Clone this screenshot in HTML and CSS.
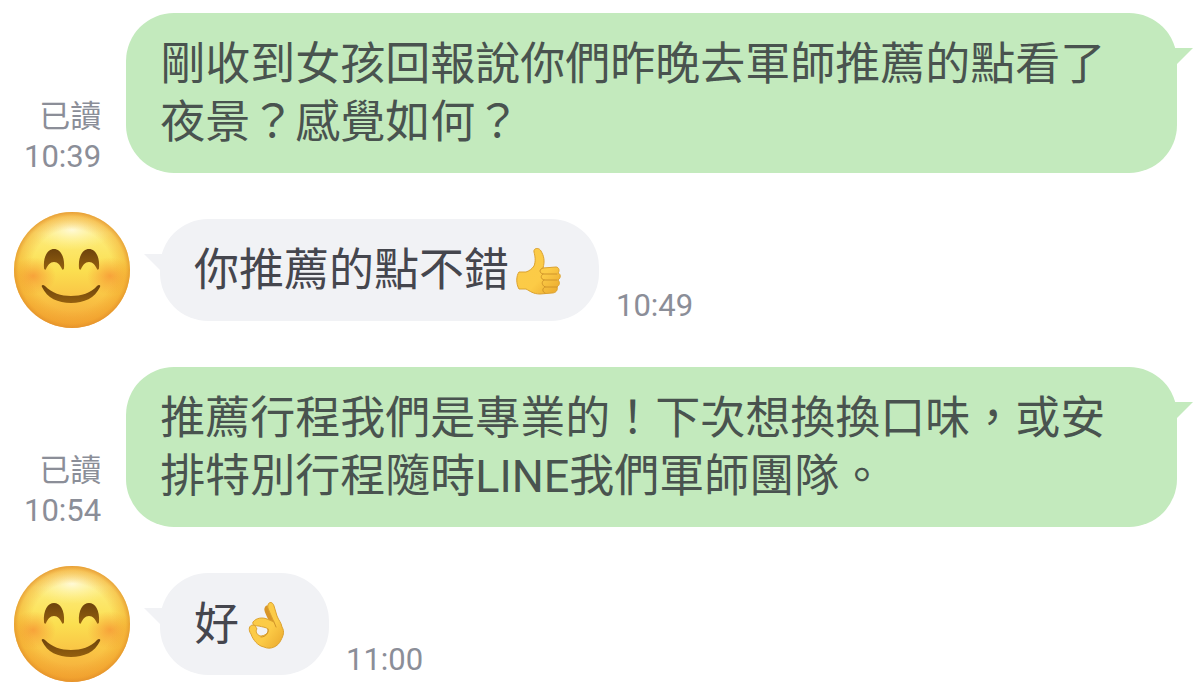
FILE: index.html
```html
<!DOCTYPE html>
<html lang="zh-Hant">
<head>
  <meta charset="UTF-8">
  <meta name="viewport" content="width=device-width, initial-scale=1.0">
  <title>LINE 對話</title>
  <link rel="stylesheet" href="styles.css">
</head>
<body>

  <!-- shared avatar drawing -->
  <svg class="defs" width="0" height="0" aria-hidden="true">
    <defs>
      <linearGradient id="face" x1="0" y1="0" x2="0" y2="1">
        <stop offset="0" stop-color="#fbd060"/>
        <stop offset="0.18" stop-color="#fdec7c"/>
        <stop offset="0.5" stop-color="#fbdf50"/>
        <stop offset="0.75" stop-color="#f9c244"/>
        <stop offset="1" stop-color="#f3a537"/>
      </linearGradient>
      <radialGradient id="rim">
        <stop offset="0.7" stop-color="#ee9420" stop-opacity="0"/>
        <stop offset="0.92" stop-color="#ee9822" stop-opacity="0.4"/>
        <stop offset="1" stop-color="#e08c28" stop-opacity="0.75"/>
      </radialGradient>
      <radialGradient id="blush">
        <stop offset="0" stop-color="#f5852f" stop-opacity="0.65"/>
        <stop offset="1" stop-color="#f58a2f" stop-opacity="0"/>
      </radialGradient>
      <radialGradient id="shine">
        <stop offset="0" stop-color="#fffbe0" stop-opacity="0.9"/>
        <stop offset="1" stop-color="#fff7a0" stop-opacity="0"/>
      </radialGradient>
      <linearGradient id="brown" x1="0" y1="0" x2="0" y2="1">
        <stop offset="0" stop-color="#6d430c"/>
        <stop offset="1" stop-color="#94600f"/>
      </linearGradient>
      <linearGradient id="skin" x1="0" y1="0" x2="1" y2="1">
        <stop offset="0" stop-color="#fbcb4a"/>
        <stop offset="0.6" stop-color="#fccb46"/>
        <stop offset="1" stop-color="#e9a62c"/>
      </linearGradient>
      <clipPath id="disc"><circle cx="59" cy="59" r="58"/></clipPath>
    </defs>
    <symbol id="smile" viewBox="0 0 118 118">
      <circle cx="59" cy="59" r="58" fill="url(#face)"/>
      <g clip-path="url(#disc)">
        <ellipse cx="59" cy="19" rx="42" ry="20" fill="url(#shine)"/>
        <ellipse cx="20" cy="65" rx="23" ry="19" fill="url(#blush)"/>
        <ellipse cx="97" cy="65" rx="23" ry="19" fill="url(#blush)"/>
      </g>
      <circle cx="59" cy="59" r="58" fill="url(#rim)"/>
      <path d="M31 57c-1-12 4-19 10-19s11 7 10 19c0 2-2 2-2 1-2-4-4-7-8-7s-6 3-8 7c0 1-2 1-2-1z" fill="url(#brown)"/>
      <path d="M66 57c-1-12 4-19 10-19s11 7 10 19c0 2-2 2-2 1-2-4-4-7-8-7s-6 3-8 7c0 1-2 1-2-1z" fill="url(#brown)"/>
      <path d="M29 76c-1-2 1-3 3-1 7 7 16 10 26 10s20-3 26-10c2-2 4-1 3 1-5 11-16 16-29 16s-24-5-29-16z" fill="url(#brown)"/>
    </symbol>
  </svg>

  <main class="chat">

    <div class="message sent">
      <div class="meta">
        <span>已讀</span>
        <time>10:39</time>
      </div>
      <p class="bubble">剛收到女孩回報說你們昨晚去軍師推薦的點看了夜景？感覺如何？</p>
    </div>

    <div class="message received">
      <svg class="avatar" role="img" aria-label="avatar"><use href="#smile"/></svg>
      <p class="bubble">你推薦的點不錯<svg class="emoji" viewBox="0 0 56 50" role="img" aria-label="thumbs up">
        <path d="M25 19C27 14 26 9 25 5C24 1 30 0 32 4C35 9 36 14 34 21L47 20C50 20 51 24 49 26C52 27 52 31 49 33C51 35 51 38 48 40C49 43 47 46 43 46L31 47C24 47 21 44 17 42L10 42C7 37 7 29 10 25L17 25C20 24 23 22 25 19Z" fill="url(#skin)" stroke="#dca22f"/>
        <path d="M34 21c-4 1-4 5 0 6h14M34 27c-3 2-2 5 1 6h13M35 33c-3 2-2 5 1 7h12M36 40c-3 1-3 5 0 6" fill="none" stroke="#d0942a" stroke-linecap="round"/>
      </svg></p>
      <div class="meta"><time>10:49</time></div>
    </div>

    <div class="message sent">
      <div class="meta">
        <span>已讀</span>
        <time>10:54</time>
      </div>
      <p class="bubble">推薦行程我們是專業的！下次想換換口味，或安排特別行程隨時LINE我們軍師團隊。</p>
    </div>

    <div class="message received">
      <svg class="avatar" role="img" aria-label="avatar"><use href="#smile"/></svg>
      <p class="bubble">好<svg class="emoji" viewBox="0 0 56 50" role="img" aria-label="OK">
        <path d="M26 6C28 3 31 5 32 8L37 20L34 25L29 18C27 13 24 9 26 6Z" fill="#d89528"/>
        <path d="M29 4C30 0 34 1 35 5L38 15C40 20 42 21 43 26C46 31 44 35 42 39C39 46 31 49 25 46C19 45 14 39 12 33C9 29 10 24 14 24C16 24 17 26 18 28C16 30 18 34 21 35C26 35 30 32 29 28C27 26 23 26 20 25C16 25 13 24 14 21C17 17 23 16 28 18L35 21L31 12C30 9 28 7 29 4Z" fill="url(#skin)" stroke="#dca22f"/>
        <path d="M29 28c1 4-2 8-7 8M35 21l2 5" fill="none" stroke="#d0942a" stroke-linecap="round"/>
      </svg></p>
      <div class="meta"><time>11:00</time></div>
    </div>

  </main>

</body>
</html>
```
FILE: styles.css
```css
* {
  margin: 0;
  padding: 0;
  box-sizing: border-box;
}

body {
  background-color: #fff;
  font-family: Roboto, "Noto Sans CJK TC", sans-serif;
}

.defs {
  position: absolute;
}

.chat {
  display: flex;
  flex-direction: column;
  padding: 13px 23px 12px 13px;
}

.message {
  display: flex;
}

.sent {
  align-items: flex-end;
  gap: 25px;
  padding-left: 11px;
}

.received {
  align-items: flex-start;
  gap: 17px;
  margin: 38px 0;
}

.received:last-child {
  margin-bottom: 0;
}

.bubble {
  position: relative;
  padding: 23px 34px 21px;
  border-radius: 48px;
  font-size: 45px;
  line-height: 58px;
}

.sent .bubble {
  flex: 1;
  background-color: #c3eabd;
  color: #49534f;
}

.received .bubble {
  margin-top: 8px;
  margin-left: 12px;
  background-color: #f1f2f5;
  color: #45464e;
}

/* little tail next to the top corner */
.bubble::after {
  content: "";
  position: absolute;
  top: 35px;
  width: 24px;
  height: 24px;
}

.sent .bubble::after {
  right: -16px;
  background-color: #c3eabd;
  clip-path: polygon(0 0, 100% 0, 0 100%);
}

.received .bubble::after {
  left: -16px;
  background-color: #f1f2f5;
  clip-path: polygon(0 0, 100% 0, 100% 100%);
}

.avatar {
  flex: none;
  width: 118px;
  height: 118px;
}

.emoji {
  width: 56px;
  height: 50px;
  vertical-align: -11px;
}

.meta {
  display: flex;
  flex-direction: column;
  flex: none;
  gap: 8px;
  color: #8b8e98;
  font-size: 31px;
  line-height: 32px;
  text-align: right;
}

.received .meta {
  margin-top: 79px;
}
```
